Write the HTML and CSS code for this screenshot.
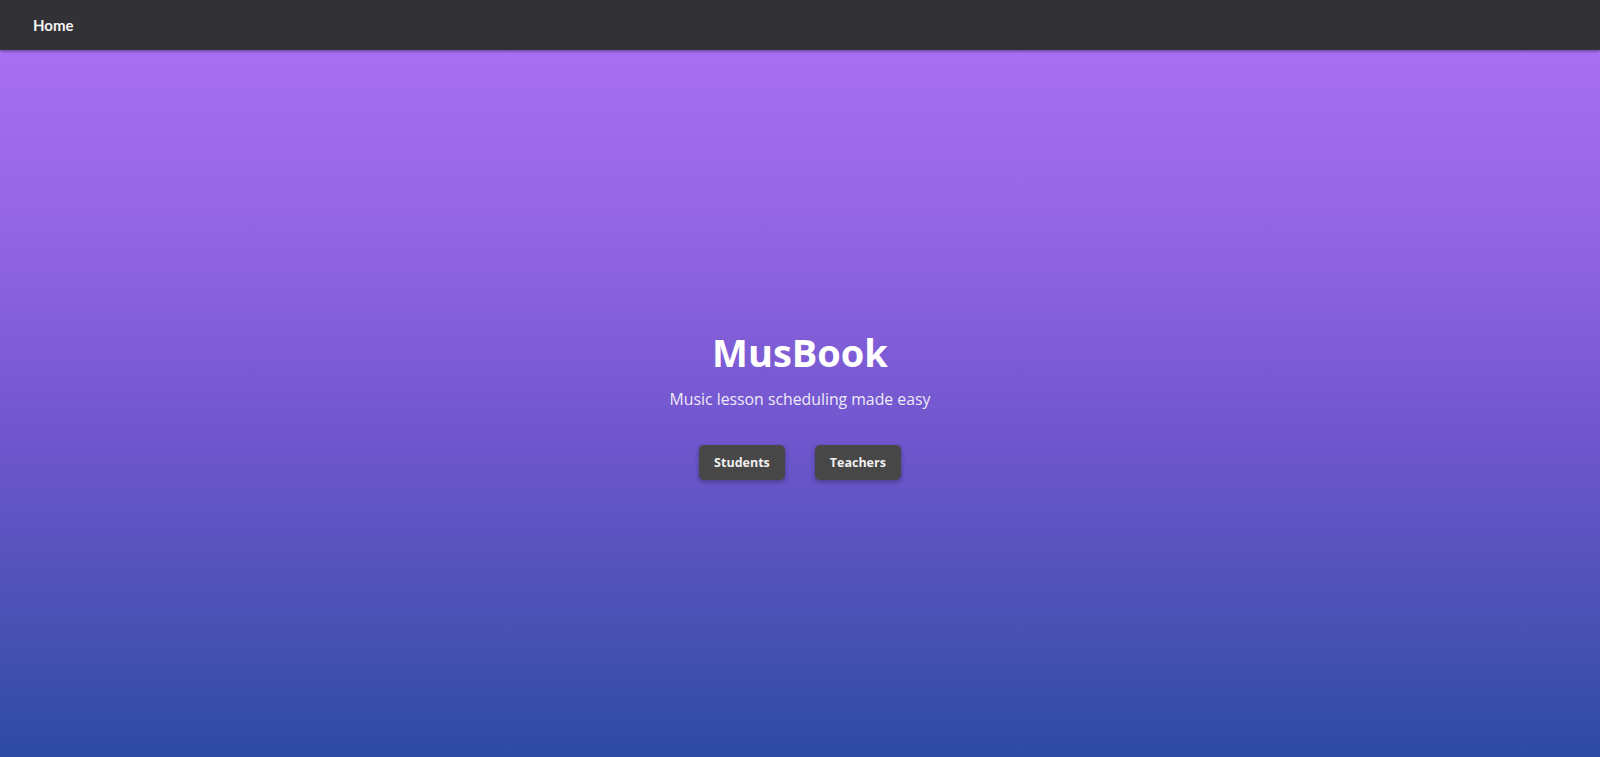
FILE: index.html
```html
<!DOCTYPE html>
<html lang="en">
<head>
<meta charset="utf-8">
<title>MusBook</title>
<link rel="stylesheet" href="styles.css">
</head>
<body>
  <nav class="navbar">
    <a class="nav-link" href="#">Home</a>
  </nav>
  <main class="hero">
    <h1 class="hero-title">MusBook</h1>
    <p class="hero-subtitle">Music lesson scheduling made easy</p>
    <div class="hero-actions">
      <button class="btn">Students</button>
      <button class="btn">Teachers</button>
    </div>
  </main>
</body>
</html>
```
FILE: styles.css
```css
* { box-sizing: border-box; }

html, body {
  margin: 0;
  height: 100%;
}

body {
  display: flex;
  flex-direction: column;
  font-family: "Open Sans", "Noto Sans", sans-serif;
  color: #fff;
}

.navbar {
  height: 50px;
  flex: none;
  display: flex;
  align-items: center;
  padding: 0 33px;
  background: #323135;
  box-shadow: 0 1px 3px rgba(0, 0, 0, 0.45);
  position: relative;
  z-index: 1;
}

.nav-link {
  color: #f4f4f4;
  text-decoration: none;
  font-family: "Lato", sans-serif;
  font-weight: 700;
  font-size: 15px;
}

.hero {
  flex: 1;
  display: flex;
  flex-direction: column;
  align-items: center;
  justify-content: center;
  padding-top: 3px;
  background: linear-gradient(180deg, #a96ff4 0%, #8e63e0 30%, #6f56cd 55%, #4b52b5 80%, #2d4aa4 100%);
}

.hero-title {
  margin: 0;
  font-size: 38px;
  font-weight: 700;
  line-height: 1.2;
}

.hero-subtitle {
  margin: 12px 0 0;
  font-size: 15.8px;
  color: #eeeaf8;
}

.hero-actions {
  display: flex;
  gap: 30px;
  margin-top: 35px;
}

.btn {
  height: 35px;
  padding: 0 15px;
  border: none;
  border-radius: 5px;
  background: #474747;
  color: #f0f0f0;
  font-family: "Open Sans", sans-serif;
  font-weight: 700;
  font-size: 12.5px;
  box-shadow: 0 2px 5px rgba(0, 0, 0, 0.3);
  cursor: pointer;
}
```
